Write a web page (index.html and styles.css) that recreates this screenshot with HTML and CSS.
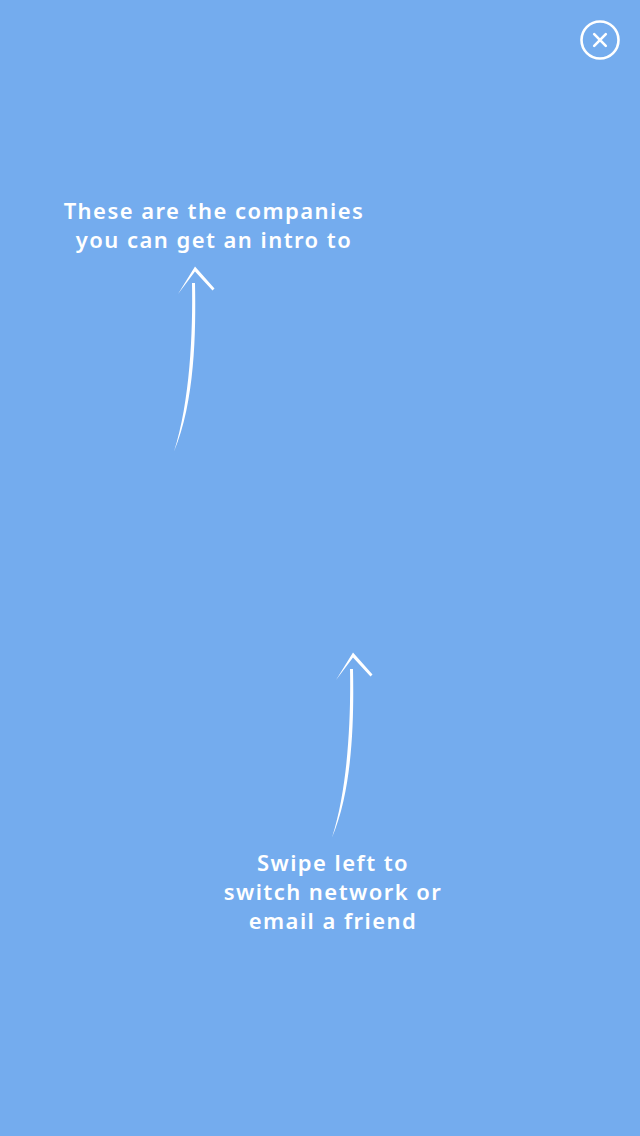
FILE: index.html
```html
<!DOCTYPE html>
<html lang="en">
<head>
<meta charset="utf-8">
<title>Tips</title>
<link rel="stylesheet" href="styles.css">
</head>
<body>
<main class="overlay">
  <header class="topbar">
    <button class="close" aria-label="Close">
      <svg viewBox="0 0 40 40" width="40" height="40" aria-hidden="true">
        <circle cx="20" cy="20" r="18.5" fill="none" stroke="#fff" stroke-width="2.6"/>
        <path d="M14.2 14.2 L25.8 25.8 M25.8 14.2 L14.2 25.8" stroke="#fff" stroke-width="2.6" stroke-linecap="round"/>
      </svg>
    </button>
  </header>

  <section class="tip tip-top">
    <p class="tip-text">These are the companies<br>you can get an intro to</p>
    <svg class="arrow" viewBox="0 0 50 190" width="50" height="190" aria-hidden="true">
      <path d="M8 32 L25 4.5 L44.5 26.5 L42.5 28.5 L25 9.5 Z" fill="#fff"/>
      <path d="M22 21 L25 21 C26 70 25 140 4 189.5 C20 140 23 70 22 21 Z" fill="#fff"/>
    </svg>
  </section>

  <section class="tip tip-bottom">
    <svg class="arrow" viewBox="0 0 50 190" width="50" height="190" aria-hidden="true">
      <path d="M8 32 L25 4.5 L44.5 26.5 L42.5 28.5 L25 9.5 Z" fill="#fff"/>
      <path d="M22 21 L25 21 C26 70 25 140 4 189.5 C20 140 23 70 22 21 Z" fill="#fff"/>
    </svg>
    <p class="tip-text">Swipe left to<br>switch network or<br>email a friend</p>
  </section>
</main>
</body>
</html>
```

FILE: styles.css
```css
html, body {
  margin: 0;
  padding: 0;
}
body {
  background: #74acee;
  font-family: "Noto Sans", "Open Sans", sans-serif;
  color: #fff;
}
.overlay {
  width: 640px;
  height: 1136px;
  display: flex;
  flex-direction: column;
  box-sizing: border-box;
}
.topbar {
  display: flex;
  justify-content: flex-end;
  padding: 20px 20px 0 0;
}
.close {
  width: 40px;
  height: 40px;
  padding: 0;
  border: 0;
  background: none;
  display: block;
}
.close svg {
  display: block;
}
.tip {
  display: flex;
  flex-direction: column;
  align-items: flex-start;
}
.tip-text {
  margin: 0;
  font-size: 22px;
  line-height: 29px;
  font-weight: 600;
  text-align: center;
  letter-spacing: 1.45px;
}
.arrow {
  display: block;
}
.tip-top {
  margin-top: 136px;
}
.tip-top .tip-text {
  margin-left: 14px;
  width: 400px;
}
.tip-top .arrow {
  margin-top: 8px;
  margin-left: 170px;
}
.tip-bottom {
  margin-top: 196px;
}
.tip-bottom .arrow {
  margin-left: 328px;
}
.tip-bottom .tip-text {
  margin-top: 10px;
  margin-left: 133px;
  width: 400px;
}
```
